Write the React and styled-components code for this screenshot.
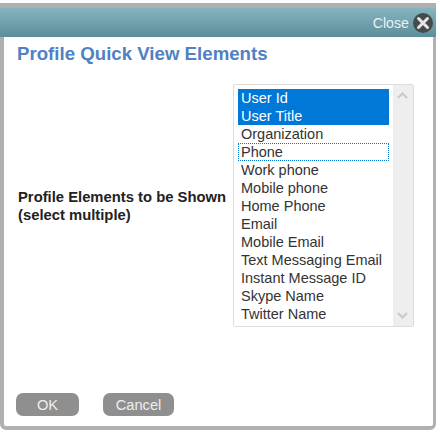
import styled, { createGlobalStyle } from "styled-components";

const GlobalStyle = createGlobalStyle`
  html, body {
    margin: 0;
    padding: 0;
    background: #fff;
    font-family: "Liberation Sans", Arial, sans-serif;
  }
`;

const Page = styled.div`
  width: 440px;
  height: 432px;
  padding-top: 3px;
  box-sizing: border-box;
  overflow: hidden;
`;

const Dialog = styled.div`
  width: 436px;
  height: 427px;
  box-sizing: border-box;
  border: 4px solid #b0b0b0;
  border-top-width: 5px;
  border-right-width: 3px;
  border-radius: 0 0 6px 6px;
  background: #fff;
  display: flex;
  flex-direction: column;
`;

const Header = styled.div`
  height: 29px;
  margin: 0 -3px 0 -4px;
  padding-right: 3px;
  background: linear-gradient(#86b4bf, #5c8e9a);
  display: flex;
  justify-content: flex-end;
  align-items: center;
  gap: 4px;
  flex-shrink: 0;
`;

const CloseLabel = styled.span`
  font-size: 14.2px;
  color: #e8f2f4;
`;

const CloseIcon = styled.svg`
  width: 20px;
  height: 20px;
  margin-top: 1px;
  display: block;
`;

const Title = styled.h1`
  margin: 6px 0 0 13px;
  font-size: 18.67px;
  line-height: 21px;
  font-weight: bold;
  color: #4f81c4;
`;

const Body = styled.div`
  margin-top: 20px;
  padding-left: 14px;
  display: flex;
  align-items: center;
  gap: 6px;
`;

const FieldLabel = styled.label`
  width: 209px;
  font-size: 14.8px;
  font-weight: bold;
  line-height: 18px;
  color: #222;
  white-space: nowrap;
`;

const ListBox = styled.div`
  width: 181px;
  height: 243px;
  box-sizing: border-box;
  border: 1px solid #ddd;
  border-radius: 2px;
  display: flex;
`;

const Options = styled.div`
  flex: 1;
  padding: 4px;
`;

const Option = styled.div`
  height: 18px;
  box-sizing: border-box;
  padding-left: 3px;
  font-size: 14.5px;
  line-height: 18px;
  white-space: nowrap;
  color: ${(p) => (p.$selected ? "#fff" : "#333")};
  background: ${(p) => (p.$selected ? "#0078d7" : "transparent")};
  outline: ${(p) => (p.$focused ? "1px dotted #0078d7" : "none")};
  outline-offset: -1px;
`;

const ScrollBar = styled.div`
  width: 20px;
  background: #eeeeee;
  display: flex;
  flex-direction: column;
  justify-content: space-between;
  align-items: center;
  padding: 7px 1px 7px 0;
  box-sizing: border-box;
`;

const Arrow = styled.svg`
  width: 11px;
  height: 7px;
  display: block;
`;

const Footer = styled.div`
  margin-top: auto;
  padding: 0 0 10px 12px;
  display: flex;
  gap: 24px;
`;

const Button = styled.button`
  width: ${(p) => p.$width}px;
  height: 23px;
  border: none;
  border-radius: 7px;
  padding: 1px 0 0;
  background: #8f8f8f;
  color: #eeeeee;
  font-family: inherit;
  font-size: 14.67px;
  line-height: 22px;
`;

const elements = [
  "User Id",
  "User Title",
  "Organization",
  "Phone",
  "Work phone",
  "Mobile phone",
  "Home Phone",
  "Email",
  "Mobile Email",
  "Text Messaging Email",
  "Instant Message ID",
  "Skype Name",
  "Twitter Name",
];

export default function App() {
  return (
    <Page>
      <GlobalStyle />
      <Dialog>
        <Header>
          <CloseLabel>Close</CloseLabel>
          <CloseIcon viewBox="0 0 20 20">
            <circle cx="10" cy="10" r="10" fill="#454a4c" />
            <path d="M5.5 5.5 L14.5 14.5 M14.5 5.5 L5.5 14.5" stroke="#e6e6e6" strokeWidth="3" strokeLinecap="round" />
          </CloseIcon>
        </Header>
        <Title>Profile Quick View Elements</Title>
        <Body>
          <FieldLabel>
            Profile Elements to be Shown
            <br />
            (select multiple)
          </FieldLabel>
          <ListBox>
            <Options>
              {elements.map((name, i) => (
                <Option key={name} $selected={i < 2} $focused={name === "Phone"}>
                  {name}
                </Option>
              ))}
            </Options>
            <ScrollBar>
              <Arrow viewBox="0 0 11 7">
                <path d="M1 6 L5.5 1.5 L10 6" fill="none" stroke="#c8c8c8" strokeWidth="2" />
              </Arrow>
              <Arrow viewBox="0 0 11 7">
                <path d="M1 1 L5.5 5.5 L10 1" fill="none" stroke="#c8c8c8" strokeWidth="2" />
              </Arrow>
            </ScrollBar>
          </ListBox>
        </Body>
        <Footer>
          <Button $width={63}>OK</Button>
          <Button $width={71}>Cancel</Button>
        </Footer>
      </Dialog>
    </Page>
  );
}
